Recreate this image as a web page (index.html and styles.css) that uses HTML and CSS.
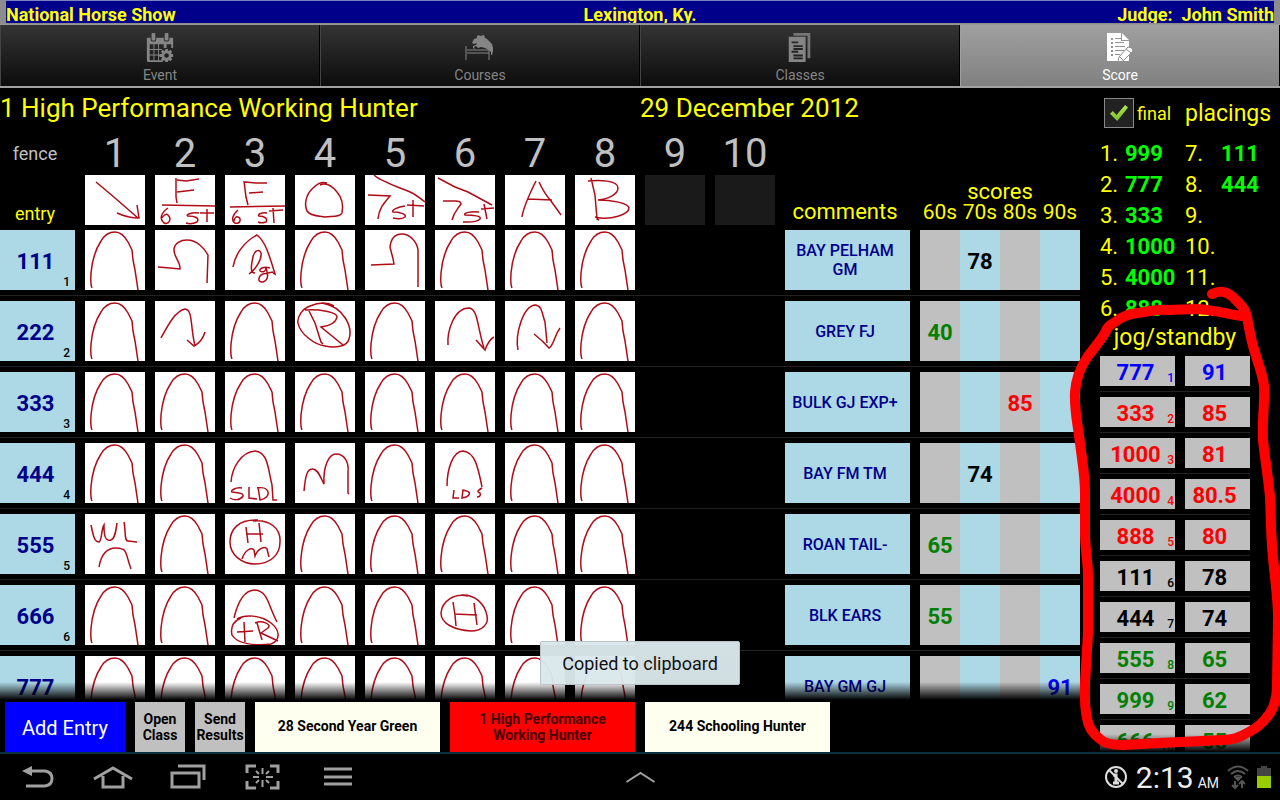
FILE: index.html
```html
<!DOCTYPE html>
<html lang="en">

<head>
  <meta charset="UTF-8">
  <meta name="viewport" content="width=device-width, initial-scale=1.0">
  <title>National Horse Show</title>
  <link rel="stylesheet" href="styles.css">
</head>

<body>

  <!-- pen sketches, reused by the score sheet -->
  <svg class="defs" aria-hidden="true">
    <symbol id="arch" viewBox="0 0 60 60"><path d="M7 58C5 54 6 46 6 43 7 32 10 20 16 11 20 4 25 2 30 2 35 2 39 5 43 12L47 20 48 30 50 40 53 60" /></symbol>
  </svg>

  <header class="titleBar">
    <span>National Horse Show</span>
    <span>Lexington, Ky.</span>
    <span class="judge">Judge:&nbsp; John Smith</span>
  </header>

  <nav class="tabs">
    <a href="#event" class="tab">
      <svg width="28" height="30" viewBox="0 0 28 32" fill="#858585">
        <path fill-rule="evenodd" d="M0 5h4v2q0 2 2 2h2q2 0 2-2V5h8v2q0 2 2 2h2q2 0 2-2V5h4v11l-2 0V12h-5v4h-3v-4h-5v5h3v1h-3v5h3v2h-3v4h4v2H2q-2 0-2-2zM3 12v5h4v-5zM3 18v5h4v-5zM3 24v5h4v-5zM8 12v5h4v-5zM8 18v5h4v-5zM8 24v5h4v-5z" />
        <rect x="5" y="0" width="4" height="8" rx="1" /><rect x="19" y="0" width="4" height="8" rx="1" />
        <circle cx="21" cy="24" r="4" fill="none" stroke="#858585" stroke-width="3" />
        <path d="M21 17v3M21 28v3M14 24h3M25 24h3M16 19l2 2M24 27l2 2M26 19l-2 2M18 27l-2 2" stroke="#858585" stroke-width="3" />
      </svg>
      Event
    </a>
    <a href="#courses" class="tab">
      <svg width="30" height="30" viewBox="0 0 30 30" fill="#858585">
        <path d="M7 10L9 6 12 5 12 3 14 2 15 3 19 2 20 5 22 6 24 8 27 11 28 15 28 18 27 22 26 22 26 19 24 17 20 15 16 14 13 15 11 13 9 14 10 16 8 15 8 13 11 12 12 10 9 11z" />
        <path d="M1 13v14M24 16v11M2 17h22M2 20h22" fill="none" stroke="#858585" stroke-width="1" />
      </svg>
      Courses
    </a>
    <a href="#classes" class="tab">
      <svg width="28" height="30" viewBox="0 0 28 32" fill="#858585">
        <path d="M7 0h18v27h-3V3H7z" fill="#757575" />
        <path fill-rule="evenodd" d="M2 4h18v27H2zM5 9v2h7V9zM7 13v2h10v-2zM7 16v2h10v-2zM5 19v2h7v-2zM7 23v2h10v-2zM7 26v2h10v-2z" />
      </svg>
      Classes
    </a>
    <a href="#score" class="tab active">
      <svg width="28" height="30" viewBox="0 0 28 30" fill="#fff">
        <path fill-rule="evenodd" d="M1 0h14v8h8v20H1zM5 5v2h2V5zM9 5v1h6V5zM5 9v2h2V9zM9 9v1h9V9zM5 13v2h2v-2zM9 13v1h10v-1zM5 17v2h2v-2zM9 17v1h9v-1zM5 21v2h2v-2zM9 21v1h5v-1z" />
        <path d="M16 0l7 7h-7z" />
        <path d="M22 14l4 1 1 3-10 10-5 1 1-5z" stroke="#8c8c8c" stroke-width="1" />
        <path d="M20 16l5 4M14 24l3 3" stroke="#8c8c8c" stroke-width="1" />
      </svg>
      Score
    </a>
  </nav>

  <main class="workspace">

    <section class="sheet">
      <div class="sheetScroll">
        <div class="classHead">
          <h1>1 High Performance Working Hunter</h1>
          <h2>29 December 2012</h2>
        </div>

        <table class="scores">
          <thead>
            <tr class="fenceNumbers">
              <th class="fence">fence</th>
              <th>1</th><th>2</th><th>3</th><th>4</th><th>5</th><th>6</th><th>7</th><th>8</th><th>9</th><th>10</th>
              <th></th>
              <th colspan="4"></th>
            </tr>
            <tr class="fenceTypes">
              <th class="entryHead">entry</th>
              <th><svg class="ink type" viewBox="0 0 60 50"><path d="M11 7L30 23 53 43M32 38Q43 43 54 43L52 30" /></svg></th>
              <th><svg class="ink type" viewBox="0 0 60 50"><path d="M21 3L21 22 22 28M22 5L31 6 44 4M22 17L39 15M7 30L60 31M13 33C6 38 4 44 9 48 14 50 17 44 13 40 11 38 8 41 7 43M44 38C36 37 30 40 33 41 40 41 45 43 42 47 38 49 34 49 31 48M52 34L52 47M45 38L59 38" /></svg></th>
              <th><svg class="ink type" viewBox="0 0 60 50"><path d="M19 6L21 22 23 30M20 7L31 8 42 8M24 18L38 17M5 32L60 31M13 35C7 40 6 46 10 48 15 50 17 43 13 42 11 41 9 44 9 46M42 38C36 37 32 40 34 41 40 41 43 44 41 47 38 48 35 48 33 47M48 33L49 48M44 36L58 35" /></svg></th>
              <th><svg class="ink type" viewBox="0 0 60 50"><path d="M32 8C26 6 22 9 17 14 11 20 9 29 12 36 15 41 24 41 30 42 38 41 45 42 47 38 48 33 48 24 42 17 38 12 32 7 25 10" /></svg></th>
              <th><svg class="ink type" viewBox="0 0 60 50"><path d="M9 0C15 6 33 12 45 17 50 19 55 23 60 27M3 20L25 21C21 26 14 32 13 44M40 31C33 32 26 35 28 37 34 37 42 39 40 42 36 45 32 44 28 43M48 25L48 42M42 30L59 31" /></svg></th>
              <th><svg class="ink type" viewBox="0 0 60 50"><path d="M3 3L20 12 33 17 57 30M8 26L20 26Q26 26 26 29C22 35 19 37 17 45M44 37C36 36 28 38 30 40 38 40 47 41 45 44 41 48 34 47 28 47M49 29L52 44M46 34L59 33" /></svg></th>
              <th><svg class="ink type" viewBox="0 0 60 50"><path d="M17 42C18 35 21 26 31 6M34 7Q39 18 46 26L56 40M23 24L47 25" /></svg></th>
              <th><svg class="ink type" viewBox="0 0 60 50"><path d="M16 3L20 20 22 44 24 45M13 6C24 5 43 5 43 13 43 19 34 24 23 25 37 25 53 28 54 33 54 39 36 46 20 42" /></svg></th>
              <th><div class="blank"></div></th>
              <th><div class="blank"></div></th>
              <th class="commentsHead">comments</th>
              <th colspan="4" class="scoresHead">
                <div>scores</div>
                <div class="bands"><span>60s</span><span>70s</span><span>80s</span><span>90s</span></div>
              </th>
            </tr>
          </thead>
          <tbody>
            <tr>
              <td><div class="entry">111<small>1</small></div></td>
              <td><svg class="ink"><use href="#arch" /></svg></td>
              <td><svg class="ink" viewBox="0 0 60 60"><path d="M3 37L15 38 25 39C26 33 19 27 19 20 19 13 26 10 32 10 42 10 50 19 53 25L52 53" /></svg></td>
              <td><svg class="ink" viewBox="0 0 60 60"><path d="M8 37C10 24 20 11 32 5 40 11 44 24 50 44L48 43M24 44C31 39 37 29 36 23 34 18 29 21 28 27 26 36 25 43 30 43M45 38C38 36 34 39 35 41 38 43 41 41 41 38 43 44 44 50 38 52 32 53 33 46 38 44L48 42" /></svg></td>
              <td><svg class="ink"><use href="#arch" /></svg></td>
              <td><svg class="ink" viewBox="0 0 60 60"><path d="M6 35L29 34C28 27 26 22 25 17 26 8 31 4 37 4 45 4 52 12 53 20L53 57" /></svg></td>
              <td><svg class="ink"><use href="#arch" /></svg></td>
              <td><svg class="ink"><use href="#arch" /></svg></td>
              <td><svg class="ink"><use href="#arch" /></svg></td>
              <td></td>
              <td></td>
              <td><div class="comment">BAY PELHAM GM</div></td>
              <td class="band"><div></div></td><td class="band"><div>78</div></td><td class="band"><div></div></td><td class="band"><div></div></td>
            </tr>
            <tr>
              <td><div class="entry">222<small>2</small></div></td>
              <td><svg class="ink"><use href="#arch" /></svg></td>
              <td><svg class="ink" viewBox="0 0 60 60"><path d="M6 37C12 26 20 10 30 8 38 9 35 24 40 45M32 39L39 45 Q47 41 50 31" /></svg></td>
              <td><svg class="ink"><use href="#arch" /></svg></td>
              <td><svg class="ink" viewBox="0 0 60 60"><path d="M39 5C31 0 22 2 15 5 7 8 2 16 3 22 5 33 20 44 30 45 40 47 52 46 54 38 58 26 49 6 27 2M10 9C24 8 42 11 42 16 41 22 33 25 26 26L48 44M14 10L20 22 26 41 28 43" /></svg></td>
              <td><svg class="ink"><use href="#arch" /></svg></td>
              <td><svg class="ink" viewBox="0 0 60 60"><path d="M13 44C12 30 19 7 34 7 43 8 42 25 49 47M41 39L50 49C53 41 55 38 59 36" /></svg></td>
              <td><svg class="ink" viewBox="0 0 60 60"><path d="M13 49C10 35 17 6 30 4 37 4 37 13 40 21L42 42M29 33Q38 40 44 47C49 44 49 35 55 27" /></svg></td>
              <td><svg class="ink"><use href="#arch" /></svg></td>
              <td></td>
              <td></td>
              <td><div class="comment">GREY FJ</div></td>
              <td class="band green"><div>40</div></td><td class="band"><div></div></td><td class="band"><div></div></td><td class="band"><div></div></td>
            </tr>
            <tr>
              <td><div class="entry">333<small>3</small></div></td>
              <td><svg class="ink"><use href="#arch" /></svg></td>
              <td><svg class="ink"><use href="#arch" /></svg></td>
              <td><svg class="ink"><use href="#arch" /></svg></td>
              <td><svg class="ink"><use href="#arch" /></svg></td>
              <td><svg class="ink"><use href="#arch" /></svg></td>
              <td><svg class="ink"><use href="#arch" /></svg></td>
              <td><svg class="ink"><use href="#arch" /></svg></td>
              <td><svg class="ink"><use href="#arch" /></svg></td>
              <td></td>
              <td></td>
              <td><div class="comment">BULK GJ EXP+</div></td>
              <td class="band"><div></div></td><td class="band"><div></div></td><td class="band red"><div>85</div></td><td class="band"><div></div></td>
            </tr>
            <tr>
              <td><div class="entry">444<small>4</small></div></td>
              <td><svg class="ink"><use href="#arch" /></svg></td>
              <td><svg class="ink"><use href="#arch" /></svg></td>
              <td><svg class="ink" viewBox="0 0 60 60"><path d="M6 39C7 25 16 9 30 8 43 9 43 26 47 42L48 57 52 57M17 45C10 44 5 48 7 49 12 50 19 50 18 53 15 58 8 57 5 55M24 44L24 55 32 56M33 44L35 57C41 56 44 52 43 49 42 45 37 44 32 45" /></svg></td>
              <td><svg class="ink" viewBox="0 0 60 60"><path d="M9 48C10 38 11 26 17 26 23 25 26 36 29 41 28 23 34 11 41 11 50 11 54 20 53 29L53 50 54 51" /></svg></td>
              <td><svg class="ink"><use href="#arch" /></svg></td>
              <td><svg class="ink" viewBox="0 0 60 60"><path d="M12 43C12 26 18 8 28 8 40 9 43 24 47 44M19 47L18 55 24 55M27 47C35 48 37 51 31 54L27 55 28 47M47 45C42 48 42 49 45 50 46 52 45 54 42 54" /></svg></td>
              <td><svg class="ink"><use href="#arch" /></svg></td>
              <td><svg class="ink"><use href="#arch" /></svg></td>
              <td></td>
              <td></td>
              <td><div class="comment">BAY FM TM</div></td>
              <td class="band"><div></div></td><td class="band"><div>74</div></td><td class="band"><div></div></td><td class="band"><div></div></td>
            </tr>
            <tr>
              <td><div class="entry">555<small>5</small></div></td>
              <td><svg class="ink" viewBox="0 0 60 60"><path d="M6 11C8 20 9 28 14 28 17 27 16 16 19 11 19 18 19 28 26 26 30 25 31 16 32 9M39 8C41 17 39 27 43 27L52 28M14 53C16 41 22 34 31 34 43 34 40 39 46 55" /></svg></td>
              <td><svg class="ink"><use href="#arch" /></svg></td>
              <td><svg class="ink" viewBox="0 0 60 60"><path d="M33 6C13 5 5 16 5 28 5 41 17 50 30 50 44 50 55 42 55 28 56 14 44 5 28 7M21 13L23 29M34 9L35 18 36 28M21 20L38 20M17 45C20 36 26 33 29 36L30 42C33 34 40 32 42 35L44 43" /></svg></td>
              <td><svg class="ink"><use href="#arch" /></svg></td>
              <td><svg class="ink"><use href="#arch" /></svg></td>
              <td><svg class="ink"><use href="#arch" /></svg></td>
              <td><svg class="ink"><use href="#arch" /></svg></td>
              <td><svg class="ink"><use href="#arch" /></svg></td>
              <td></td>
              <td></td>
              <td><div class="comment">ROAN TAIL-</div></td>
              <td class="band green"><div>65</div></td><td class="band"><div></div></td><td class="band"><div></div></td><td class="band"><div></div></td>
            </tr>
            <tr>
              <td><div class="entry">666<small>6</small></div></td>
              <td><svg class="ink"><use href="#arch" /></svg></td>
              <td><svg class="ink"><use href="#arch" /></svg></td>
              <td><svg class="ink" viewBox="0 0 60 60"><path d="M9 33C13 16 20 5 30 5 43 6 43 20 52 37M12 34C20 29 36 30 46 38 55 45 56 55 46 59 30 61 12 59 7 50 5 41 9 36 16 33M12 47L28 46M19 37L20 57M32 38L37 55M30 38C37 35 47 39 43 43L36 48 53 56" /></svg></td>
              <td><svg class="ink"><use href="#arch" /></svg></td>
              <td><svg class="ink"><use href="#arch" /></svg></td>
              <td><svg class="ink" viewBox="0 0 60 60"><path d="M33 11C19 8 7 16 6 28 6 39 20 45 36 46 47 46 54 39 52 31 50 19 40 9 26 10M18 17L20 30 21 41M39 18L42 40M19 29L42 30" /></svg></td>
              <td><svg class="ink"><use href="#arch" /></svg></td>
              <td><svg class="ink"><use href="#arch" /></svg></td>
              <td></td>
              <td></td>
              <td><div class="comment">BLK EARS</div></td>
              <td class="band green"><div>55</div></td><td class="band"><div></div></td><td class="band"><div></div></td><td class="band"><div></div></td>
            </tr>
            <tr>
              <td><div class="entry">777<small>7</small></div></td>
              <td><svg class="ink"><use href="#arch" /></svg></td>
              <td><svg class="ink"><use href="#arch" /></svg></td>
              <td><svg class="ink"><use href="#arch" /></svg></td>
              <td><svg class="ink"><use href="#arch" /></svg></td>
              <td><svg class="ink"><use href="#arch" /></svg></td>
              <td><svg class="ink"><use href="#arch" /></svg></td>
              <td><svg class="ink"><use href="#arch" /></svg></td>
              <td><svg class="ink"><use href="#arch" /></svg></td>
              <td></td>
              <td></td>
              <td><div class="comment">BAY GM GJ</div></td>
              <td class="band"><div></div></td><td class="band"><div></div></td><td class="band"><div></div></td><td class="band blue"><div>91</div></td>
            </tr>
          </tbody>
        </table>
      </div>

      <div class="actions">
        <button class="addEntry">Add Entry</button>
        <button class="small">Open Class</button>
        <button class="small">Send Results</button>
        <button class="class">28 Second Year Green</button>
        <button class="class current">1 High Performance Working Hunter</button>
        <button class="class">244 Schooling Hunter</button>
      </div>
    </section>

    <aside class="results">
      <div class="final">
        <input type="checkbox" id="final" checked>
        <label for="final">final</label>
        <h2>placings</h2>
      </div>

      <div class="placings">
        <ol>
          <li>1. <b>999</b></li>
          <li>2. <b>777</b></li>
          <li>3. <b>333</b></li>
          <li>4. <b>1000</b></li>
          <li>5. <b>4000</b></li>
          <li>6. <b>888</b></li>
        </ol>
        <ol class="second">
          <li>7. <b>111</b></li>
          <li>8. <b>444</b></li>
          <li>9.</li>
          <li>10.</li>
          <li>11.</li>
          <li>12.</li>
        </ol>
      </div>

      <h2 class="jogHead">jog/standby</h2>
      <div class="jogScroll">
        <table class="jog">
          <tr class="blue"><td><div>777<small>1</small></div></td><td><div>91</div></td></tr>
          <tr class="red"><td><div>333<small>2</small></div></td><td><div>85</div></td></tr>
          <tr class="red"><td><div>1000<small>3</small></div></td><td><div>81</div></td></tr>
          <tr class="red"><td><div>4000<small>4</small></div></td><td><div>80.5</div></td></tr>
          <tr class="red"><td><div>888<small>5</small></div></td><td><div>80</div></td></tr>
          <tr><td><div>111<small>6</small></div></td><td><div>78</div></td></tr>
          <tr><td><div>444<small>7</small></div></td><td><div>74</div></td></tr>
          <tr class="green"><td><div>555<small>8</small></div></td><td><div>65</div></td></tr>
          <tr class="green"><td><div>999<small>9</small></div></td><td><div>62</div></td></tr>
          <tr class="green"><td><div>666<small>10</small></div></td><td><div>55</div></td></tr>
        </table>
      </div>

      <!-- red marker loop round the jog list -->
      <svg class="marker" viewBox="1060 88 220 664" width="220" height="664" aria-hidden="true">
        <path d="M1212 294C1220 290 1226 291 1233 297 1240 304 1246 309 1247 317 1249 328 1250 334 1252 342 1256 358 1263 374 1264 386 1265 400 1262 420 1263 440 1265 460 1268 475 1270 497 1271 520 1271 540 1273 557 1275 580 1278 600 1278 617L1277 683C1277 695 1275 706 1270 713 1264 722 1256 729 1247 733 1239 738 1231 740 1223 740L1160 743 1123 745C1112 745 1104 743 1100 739 1092 733 1088 727 1087 718 1084 705 1085 695 1085 683L1088 633 1088 577C1088 560 1085 550 1085 533L1085 493C1085 475 1082 460 1080 443 1078 425 1074 410 1075 392 1076 378 1081 366 1088 356 1094 348 1101 340 1105 333 1107 327 1110 325 1115 322 1121 317 1129 314 1137 313 1147 312 1157 309 1167 310L1197 309C1214 310 1228 314 1242 316" />
      </svg>
    </aside>
  </main>

  <footer class="systemBar">
    <button aria-label="Back"><svg width="34" height="24" viewBox="0 0 34 24"><path d="M8 6h16q7 1 7 7.500t-7 7.500H5" /><path d="M1 6l10-5v10z" fill="#a0a0a0" stroke="none" /></svg></button>
    <button aria-label="Home"><svg width="42" height="26" viewBox="0 0 42 26"><path d="M2 15L21 4 40 15M11 12v11h20V12" /></svg></button>
    <button aria-label="Recent apps"><svg width="38" height="26" viewBox="0 0 38 26"><path d="M3 9h27v14H3zM9 2h26v14" /></svg></button>
    <button aria-label="Screenshot"><svg width="36" height="26" viewBox="0 0 36 26"><path d="M2 9V2h9M25 2h8v7M33 17v7h-8M11 24H2v-7" /><path d="M17.500 4v6M17.500 16v7M8 13h6M21 13h7M11 7l3 3M24 7l-3 3M11 19l3-3M24 19l-3-3" stroke-width="2" /></svg></button>
    <button aria-label="Menu"><svg width="28" height="22" viewBox="0 0 28 22"><path d="M0 3h28M0 11h28M0 18h28" /></svg></button>
    <button class="expand" aria-label="Expand"><svg width="30" height="16" viewBox="0 0 30 16"><path d="M1 13L15 4 29 13" /></svg></button>
    <div class="status">
      <svg width="24" height="24" viewBox="0 0 24 24"><circle cx="12" cy="12" r="10" /><path d="M5 5l14 14" stroke-width="2" /><path d="M9 10h3v8M9 18h6" stroke-width="3" /><circle cx="12" cy="6" r="2" fill="#ddd" stroke="none" /></svg>
      <span class="clock">2:13<small>AM</small></span>
      <svg class="wifi" width="22" height="26" viewBox="0 0 22 26"><path d="M1 7q10-9 20 0M4 10q7-6 14 0M7 13q4-3 8 0" /><path d="M11 16l-2-2h4z" /><path d="M8 17v7M5 21l3 3 3-3M15 24v-7M12 20l3-3 3 3" /></svg>
      <svg width="14" height="22" viewBox="0 0 14 22"><path d="M4 0h6v2h4v8H0V2h4z" fill="#444" stroke="none" /><path d="M0 10h14v12H0z" fill="#9c0" stroke="none" /></svg>
    </div>
  </footer>

  <div class="toast" role="status">Copied to clipboard</div>

</body>

</html>
```
FILE: styles.css
```css
:root {
  --yellow: #ffff00;
  --lightBlue: #add8e6;
  --silver: #c0c0c0;
  --navy: #00008b;
}

* {
  box-sizing: border-box;
}

body {
  margin: 0;
  height: 100vh;
  display: flex;
  flex-direction: column;
  position: relative;
  overflow: hidden;
  background: #000;
  color: var(--yellow);
  font-family: Roboto, sans-serif;
  font-size: 22px;
}

h1,
h2 {
  margin: 0;
  font-weight: normal;
}

button {
  border: 0;
  padding: 0;
  font-family: inherit;
}

.defs {
  display: none;
}

/* title bar */
.titleBar {
  height: 24px;
  display: grid;
  grid-template-columns: 1fr auto 1fr;
  background: var(--navy);
  border: solid #8c8c8c;
  border-width: 1px 6px;
  border-top-color: #8080c0;
  font-size: 18px;
  font-weight: bold;
  line-height: 28px;
  overflow: hidden;
}

.judge {
  text-align: right;
}

/* tabs */
.tabs {
  height: 64px;
  display: flex;
  border-top: 1px solid #999;
  border-bottom: 2px solid #a0a0a0;
}

.tab {
  flex: 1;
  display: flex;
  flex-direction: column;
  align-items: center;
  padding-top: 8px;
  gap: 4px;
  border-left: 1px solid #444;
  border-right: 1px solid #000;
  background: linear-gradient(#343434, #0c0c0c);
  color: #858585;
  font-size: 14px;
  line-height: 16px;
  text-decoration: none;
}

.tab.active {
  background: linear-gradient(#a0a0a0, #808080);
  border-left-color: #a0a0a0;
  color: #fff;
}

/* main area */
.workspace {
  flex: 1;
  min-height: 0;
  display: grid;
  grid-template-columns: 1fr 200px;
}

.sheet {
  min-height: 0;
  display: flex;
  flex-direction: column;
}

.sheetScroll,
.jogScroll {
  flex: 1;
  min-height: 0;
  overflow: hidden;
  position: relative;
}

.sheetScroll::after,
.jogScroll::after {
  content: "";
  position: absolute;
  left: 0;
  right: 0;
  bottom: 0;
  height: 18px;
  background: linear-gradient(transparent, #000);
}

.classHead {
  height: 45px;
  display: grid;
  grid-template-columns: 16fr 11fr;
}

.classHead h1,
.classHead h2 {
  font-size: 26px;
  line-height: 40px;
}

table {
  border-collapse: collapse;
}

th {
  padding: 0 10px 0 0;
  font-weight: normal;
}

.fenceNumbers th {
  height: 42px;
  color: var(--silver);
  font-size: 40px;
  line-height: 42px;
}

.fenceTypes th {
  height: 50px;
  vertical-align: bottom;
}

.fenceNumbers .fence,
.fenceTypes .entryHead {
  padding-right: 15px;
  font-size: 18px;
  line-height: 22px;
}

.fenceTypes .commentsHead {
  padding-right: 15px;
  line-height: 26px;
}

.fenceTypes .scoresHead {
  padding: 0;
  line-height: 20px;
  padding-bottom: 3px;
}

.bands {
  display: grid;
  grid-template-columns: repeat(4, 1fr);
  font-size: 21px;
}

.ink {
  display: block;
  width: 60px;
  height: 60px;
  background: #fff;
  fill: none;
  stroke: #b00c18;
  stroke-width: 1.5;
}

.ink.type {
  height: 50px;
}

.blank {
  width: 60px;
  height: 50px;
  background: #1a1a1a;
}

.scores td {
  padding: 5px 10px 5px 0;
  border-bottom: 1px solid #222;
}

.entry,
.comment,
.band div,
.jog div {
  position: relative;
  display: flex;
  align-items: center;
  justify-content: center;
  height: 60px;
  padding-top: 2px;
  background: var(--lightBlue);
  color: var(--navy);
  font-weight: bold;
}

.entry {
  width: 75px;
  padding-right: 4px;
}

.entry small,
.jog small {
  position: absolute;
  right: 5px;
  bottom: 2px;
  color: #000;
  font-size: 12px;
  font-weight: 500;
  line-height: 12px;
}

.comment {
  width: 125px;
  padding: 0 10px 0 5px;
  font-size: 16px;
  font-weight: 500;
  line-height: 19px;
  text-align: center;
}

.scores td.band {
  padding-right: 0;
}

.band div {
  width: 40px;
  color: #000;
}

.band:nth-child(odd) div {
  background: var(--silver);
}

.green div,
.jog .green small {
  color: #008000;
}

.red div,
.jog .red small {
  color: #ff0000;
}

.blue div,
.jog .blue small {
  color: #0000ff;
}

/* bottom buttons */
.actions {
  display: flex;
  gap: 10px;
  padding: 2px 5px 0;
}

.actions button {
  height: 50px;
  color: #000;
  font-size: 14px;
  font-weight: bold;
  line-height: 16px;
}

.actions .addEntry {
  width: 120px;
  padding-top: 2px;
  background: #0000ff;
  color: #fff;
  font-size: 20px;
  font-weight: normal;
}

.actions .small {
  width: 50px;
  background: var(--silver);
}

.actions .class {
  width: 185px;
  padding: 0 20px 3px;
  background: #fffff0;
}

.actions .current {
  padding-bottom: 0;
  background: #ff0000;
  color: #400;
}

/* right column */
.results {
  min-height: 0;
  position: relative;
  display: flex;
  flex-direction: column;
  padding-left: 20px;
}

.final {
  height: 50px;
  display: flex;
  align-items: center;
  padding-left: 4px;
}

.final input {
  appearance: none;
  width: 30px;
  height: 30px;
  margin: 0;
  border: 1px solid #888;
  background: #222;
}

.final input:checked::after {
  content: "";
  display: block;
  width: 18px;
  height: 16px;
  margin: 6px 5px;
  background: linear-gradient(#b4e650, #78be28);
  clip-path: polygon(0 55%, 16% 38%, 36% 62%, 84% 0, 100% 16%, 40% 100%);
}

.final label {
  width: 51px;
  padding-left: 3px;
  font-size: 18px;
}

.final h2,
.jogHead {
  font-size: 23px;
}

.placings {
  display: grid;
  grid-template-columns: 85px 85px;
  height: 178px;
  overflow: hidden;
}

.placings ol {
  margin: 0;
  padding: 0;
  list-style: none;
}

.placings li {
  display: grid;
  grid-template-columns: 25px 1fr;
  line-height: 31px;
}

.placings b {
  color: #00ff00;
}

.second b {
  text-align: center;
}

.jogHead {
  height: 35px;
  width: 150px;
  line-height: 44px;
  text-align: center;
}

.jog td {
  padding: 5px 10px 5px 0;
  border-bottom: 1px solid #222;
}

.jog td + td {
  padding-right: 0;
}

.jog div {
  width: 75px;
  height: 30px;
  padding-right: 4px;
  background: var(--silver);
}

.jog td + td div {
  width: 65px;
  padding-right: 6px;
}

.jog tr:not([class]) div {
  color: #000;
}

.jog small {
  right: 1px;
}

.marker {
  position: absolute;
  top: 0;
  right: 0;
  fill: none;
  stroke: #ff0000;
  stroke-width: 10;
  stroke-linecap: round;
  stroke-linejoin: round;
  pointer-events: none;
}

/* android system bar */
.systemBar {
  position: relative;
  height: 48px;
  display: flex;
  align-items: center;
  border-top: 2px solid #07323f;
}

.systemBar button {
  width: 75px;
  height: 46px;
  background: none;
}

.systemBar svg {
  fill: none;
  stroke: #a0a0a0;
  stroke-width: 3;
  vertical-align: middle;
}

.systemBar .expand {
  position: absolute;
  left: 50%;
  transform: translateX(-50%);
}

.systemBar .expand svg {
  stroke-width: 2;
}

.status {
  margin-left: auto;
  display: flex;
  align-items: center;
  gap: 8px;
  padding-right: 9px;
}

.status svg {
  stroke: #ddd;
  stroke-width: 2;
}

.systemBar .wifi {
  stroke: #555;
  stroke-width: 2;
}

.clock {
  color: #eee;
  font-size: 30px;
}

.clock small {
  margin-left: 4px;
  font-size: 14px;
}

.toast {
  position: absolute;
  bottom: 115px;
  left: 50%;
  transform: translateX(-50%);
  width: 200px;
  height: 44px;
  border: 1px solid #b8c4c8;
  border-radius: 2px;
  background: rgba(218, 232, 236, 0.96);
  color: #111;
  font-size: 18px;
  line-height: 44px;
  text-align: center;
}
```
